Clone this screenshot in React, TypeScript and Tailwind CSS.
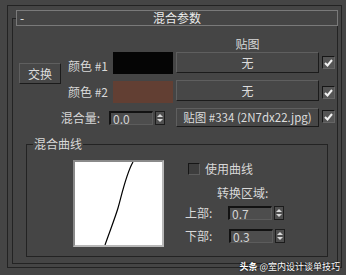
import React from 'react';

const font = "font-['Noto_Sans_CJK_SC',sans-serif]";

function Check({ checked = false }: { checked?: boolean }) {
  return (
    <div className="w-[13px] h-[13px] border border-t-[#161616] border-l-[#161616] border-b-[#656565] border-r-[#656565] bg-[#555555] flex items-center justify-center">
      {checked && (
        <svg width="9" height="8" viewBox="0 0 9 8">
          <path d="M1 4 L3.5 6.5 L8 1" stroke="#f2f2f2" strokeWidth="2" fill="none" />
        </svg>
      )}
    </div>
  );
}

function Spinner({ value }: { value: string }) {
  return (
    <div className="flex items-center gap-[2px]">
      <div className="w-[44px] h-[14px] bg-[#4d4d4d] border-t-2 border-l-2 border-b border-r border-t-[#121212] border-l-[#121212] border-b-[#5c5c5c] border-r-[#5c5c5c] pl-[2px] text-[12px] leading-[11px] text-[#d4d4d4]">
        {value}
      </div>
      <div className="w-[10px] h-[14px] border border-[#1c1c1c] bg-[#4f4f4f] flex flex-col items-center justify-center gap-[2px]">
        <svg width="6" height="3" viewBox="0 0 6 3">
          <path d="M0 3 L3 0 L6 3 Z" fill="#d8d8d8" />
        </svg>
        <svg width="6" height="3" viewBox="0 0 6 3">
          <path d="M0 0 L6 0 L3 3 Z" fill="#d8d8d8" />
        </svg>
      </div>
    </div>
  );
}

function Btn({ children, className }: { children: React.ReactNode; className: string }) {
  return (
    <div
      className={`flex items-center justify-center border border-t-[#5f5f5f] border-l-[#5f5f5f] border-b-[#1b1b1b] border-r-[#1b1b1b] bg-[#474747] leading-none text-[#dcdcdc] ${className}`}
    >
      {children}
    </div>
  );
}

export default function App() {
  return (
    <div className={`relative w-[346px] h-[275px] overflow-hidden bg-[#454545] pt-[5px] pl-[7px] text-[#d8d8d8] ${font}`}>
      <div className="w-[335px] h-[263px] border border-[#232323] pt-[12px] pl-[4px]">
        <div className="w-[326px] h-[246px] border border-[#232323]">
          {/* rollout header */}
          <div className="-mt-[9px] ml-[3px] w-[322px] h-[16px] border border-[#7a7a7a] bg-[#454545] flex items-center text-[12px] leading-none text-[#ececec]">
            <span className="w-[12px] pl-[3px]">-</span>
            <span className="flex-1 text-center pr-[12px]">混合参数</span>
          </div>

          {/* maps */}
          <div className="mt-[11px] grid grid-cols-[51px_49px_63px_146px_14px] grid-rows-[15px_28px_28px_20px] text-[12px] leading-[14px]">
            <div className="col-start-4 row-start-1 w-[143px] text-center">贴图</div>

            <div className="col-start-1 row-start-2 row-span-2 self-start">
              <Btn className="ml-[6px] mt-[11px] w-[42px] h-[21px] text-[12px]">交换</Btn>
            </div>

            <div className="col-start-2 row-start-2 self-start mt-[7px] text-right pr-[5px]">颜色 #1</div>
            <div className="col-start-3 row-start-2 self-start w-[60px] h-[22px] bg-[#050505]" />
            <Btn className="col-start-4 row-start-2 self-start w-[143px] h-[21px] text-[12px]">无</Btn>
            <div className="col-start-5 row-start-2 self-start mt-[4px]">
              <Check checked />
            </div>

            <div className="col-start-2 row-start-3 self-start mt-[5px] text-right pr-[5px]">颜色 #2</div>
            <div className="col-start-3 row-start-3 self-start mt-[1px] w-[60px] h-[22px] bg-[#623f33]" />
            <Btn className="col-start-4 row-start-3 self-start w-[143px] h-[21px] text-[12px]">无</Btn>
            <div className="col-start-5 row-start-3 self-start mt-[6px]">
              <Check checked />
            </div>

            <div className="col-start-1 col-span-3 row-start-4 flex items-center justify-end pr-[11px]">
              <span className="mr-[9px]">混合量:</span>
              <Spinner value="0.0" />
            </div>
            <Btn className="col-start-4 row-start-4 self-start w-[143px] h-[19px] text-[11.5px]">贴图 #334 (2N7dx22.jpg)</Btn>
            <div className="col-start-5 row-start-4 self-start mt-[2px]">
              <Check checked />
            </div>
          </div>

          {/* blend curve */}
          <fieldset className="mt-[9px] ml-[13px] w-[302px] h-[120px] border border-[#232323]">
            <legend className="ml-[6px] px-[1px] text-[12px] leading-[14px]">混合曲线</legend>
            <div className="flex">
              <div className="ml-[46px] mt-[9px] w-[91px] h-[87px] border-2 border-t-[#8a8a8a] border-l-[#8a8a8a] border-b-[#b8b8b8] border-r-[#b8b8b8] bg-white">
                <svg width="87" height="83" viewBox="0 0 87 83">
                  <path d="M30 83 C36 66, 40 56, 43 46 S 51 12, 58 0" stroke="#000" strokeWidth="1.2" fill="none" />
                </svg>
              </div>

              <div className="ml-[21px] mt-[12px] flex flex-col text-[12px] leading-[14px]">
                <div className="flex items-center ml-[3px] h-[12px]">
                  <div className="w-[12px] h-[12px] border border-t-[#161616] border-l-[#161616] border-b-[#5c5c5c] border-r-[#5c5c5c] bg-[#3d3d3d]" />
                  <span className="ml-[5px]">使用曲线</span>
                </div>
                <div className="mt-[11px] ml-[32px]">转换区域:</div>
                <div className="mt-[6px] flex items-center h-[14px]">
                  <span className="w-[43px]">上部:</span>
                  <Spinner value="0.7" />
                </div>
                <div className="mt-[9px] flex items-center h-[14px]">
                  <span className="w-[44px]">下部:</span>
                  <Spinner value="0.3" />
                </div>
              </div>
            </div>
          </fieldset>
        </div>
      </div>

      {/* watermark */}
      <div className="absolute right-[6px] bottom-[3px] text-[9px] leading-[11px] text-white [text-shadow:0_0_2px_#000]">
        <span className="font-bold">头条</span> @室内设计谈单技巧
      </div>
    </div>
  );
}
